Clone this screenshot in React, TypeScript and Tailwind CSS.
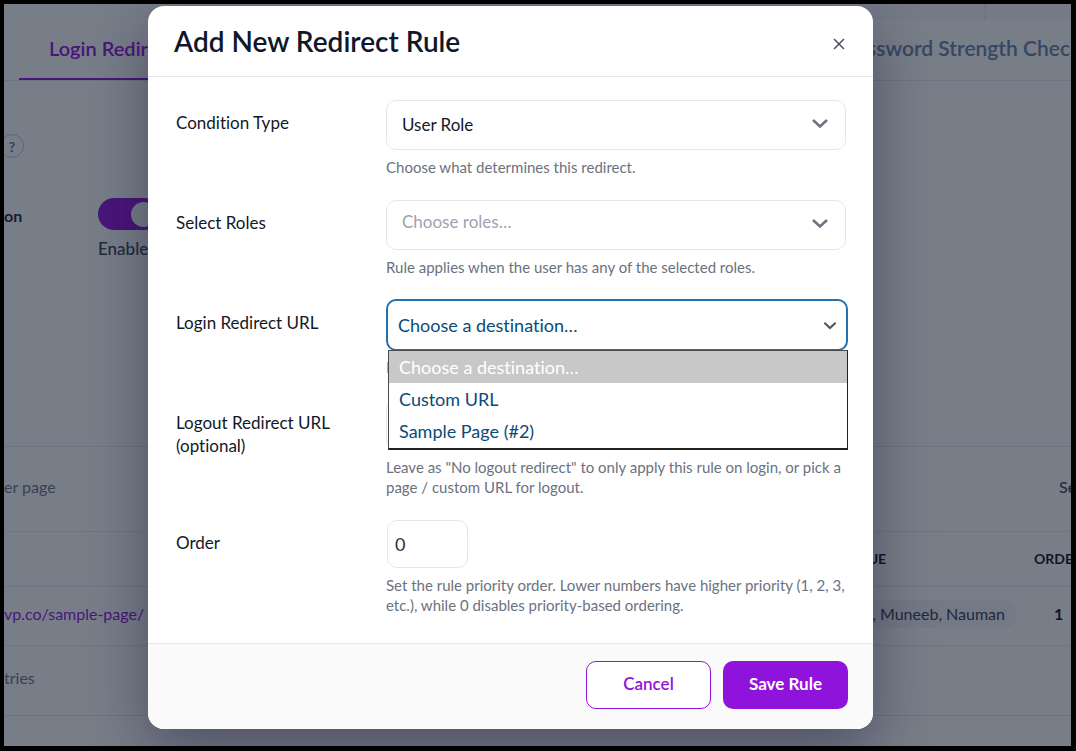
import React from 'react';

type FieldProps = {
  id: string;
  label: React.ReactNode;
  help?: React.ReactNode;
  children: React.ReactNode;
};

const Chevron = ({ className }: { className: string }) => (
  <svg viewBox="0 0 20 20" fill="none" stroke="currentColor" strokeWidth="2.6" className={className}>
    <path d="M3 6l7 6.5 7-6.5" />
  </svg>
);

const Field = ({ id, label, help, children }: FieldProps) => (
  <div className="grid grid-cols-[210px_minmax(0,1fr)]">
    <label htmlFor={id} className="pt-[11px] pr-8 text-[17px] leading-[23px] text-[#111827]">
      {label}
    </label>
    <div>
      {children}
      {help && <p className="mt-[7px] text-[15px] leading-[20px] text-[#6b7280]">{help}</p>}
    </div>
  </div>
);

const Background = () => (
  <div className="flex min-h-[742px] flex-col bg-[#f9fafb] text-[16px] whitespace-nowrap text-[#334155]">
    <nav className="flex h-[77px] justify-between border-b border-[#dfe2e8] pl-[15px] text-[21px] font-semibold">
      <a href="#login" className="flex w-[200px] items-center border-b-2 border-[#9013db] pt-3.5 pl-[30px] text-[20px] text-[#9013db]">
        Login Redirects
      </a>
      <div className="flex w-[227px] flex-col">
        <div className="flex h-4 shrink-0 justify-end bg-[#f1f2f5]">
          <div className="mr-[85px] w-0.5 bg-[#e6e8ec]" />
        </div>
        <a href="#password" className="flex flex-1 items-center pb-[5px] text-[#6482a8]">
          Password Strength Checker
        </a>
      </div>
    </nav>

    <section className="h-[366px] border-b border-[#dfe2e8] pt-[53px]">
      <button className="-ml-1 flex size-6 items-center justify-center rounded-full border border-[#b6c0dc] text-[14px] font-bold text-[#4f76ac]">
        ?
      </button>
      <div className="mt-10 flex">
        <span className="w-[94px] pt-1.5 font-bold text-[#1e293b]">on</span>
        <label className="flex flex-col gap-1.5">
          <input type="checkbox" role="switch" defaultChecked className="peer sr-only" />
          <span className="flex h-8 w-[62px] items-center justify-end rounded-full bg-[#9013db] pr-1">
            <span className="size-[25px] rounded-full bg-[#f9fafb]" />
          </span>
          <span className="text-[17px] font-medium">Enabled</span>
        </label>
      </div>
    </section>

    <div className="flex h-[85px] items-center justify-between border-b border-[#e5e7eb] pb-1 text-[#64748b]">
      <span>er page</span>
      <span className="w-[12px] font-medium text-[#334155]">Search</span>
    </div>

    <table className="w-full border-collapse text-left">
      <thead>
        <tr className="h-[54px] border-b border-[#dfe2e8] text-[14px] text-[#0f172a]">
          <th />
          <th className="w-[200px] pl-2 font-bold">VALUE</th>
          <th className="w-[37px] max-w-[37px] font-bold">ORDER</th>
        </tr>
      </thead>
      <tbody>
        <tr className="h-[59px] border-b border-[#e5e7eb]">
          <td className="pb-1">
            <a href="#sample" className="text-[#9013db]">
              vp.co/sample-page/
            </a>
          </td>
          <td className="pr-[17px] pb-1 text-right">
            <span className="inline-block rounded-full bg-[#eef0f4] px-3 leading-7">B, Muneeb, Nauman</span>
          </td>
          <td className="pb-1 pl-5 font-bold text-[#0f172a]">1</td>
        </tr>
      </tbody>
    </table>

    <div className="flex h-[70px] items-center border-b border-[#dfe2e8] pb-1 text-[#64748b]">tries</div>
  </div>
);

const selectBox =
  'block h-[50px] w-full appearance-none rounded-[10px] border border-[#e5e7eb] bg-white px-[15px] text-[17px] outline-none';

const options = ['Choose a destination…', 'Custom URL', 'Sample Page (#2)'];

const RuleDialog = () => (
  <form
    role="dialog"
    aria-labelledby="dialog-title"
    className="w-full max-w-[725px] overflow-hidden rounded-2xl bg-white shadow-[0_20px_60px_rgba(15,10,40,0.4)]"
  >
    <header className="flex h-[71px] items-center justify-between border-b border-[#e5e7eb] pr-6 pl-[26px]">
      <h2 id="dialog-title" className="text-[28px] font-semibold text-[#0f172a]">
        Add New Redirect Rule
      </h2>
      <button type="button" aria-label="Close" className="mt-1.5 p-1 text-[#4b5563]">
        <svg viewBox="0 0 12 12" className="size-3" fill="none" stroke="currentColor" strokeWidth="1.6">
          <path d="M1 1l10 10M11 1L1 11" />
        </svg>
      </button>
    </header>

    <div className="flex flex-col gap-[23px] pt-[23px] pr-[27px] pb-7 pl-7">
      <Field id="condition" label="Condition Type" help="Choose what determines this redirect.">
        <div className="relative">
          <select id="condition" className={`${selectBox} text-[#111827]`}>
            <option>User Role</option>
          </select>
          <Chevron className="pointer-events-none absolute top-[14px] right-4 size-5 text-[#6b7280]" />
        </div>
      </Field>

      <Field id="roles" label="Select Roles" help="Rule applies when the user has any of the selected roles.">
        <div className="relative">
          <select id="roles" className={`${selectBox} pb-[7px] text-[#9ca3af]`}>
            <option>Choose roles…</option>
          </select>
          <Chevron className="pointer-events-none absolute top-[14px] right-4 size-5 text-[#6b7280]" />
        </div>
      </Field>

      <Field id="login-url" label="Login Redirect URL" help="Pick the page users reach after login.">
        <div className="relative -my-px -mr-0.5">
          <select
            id="login-url"
            className="block h-[52px] w-full appearance-none rounded-[10px] border-2 border-[#2271b1] bg-white px-[10px] text-[18px] text-[#0a4b78] outline-none"
          >
            <option>Choose a destination…</option>
          </select>
          <Chevron className="pointer-events-none absolute top-[19px] right-[10px] size-4 text-[#50575e]" />
          <ul
            role="listbox"
            className="absolute inset-x-0 top-[51px] z-10 ml-0.5 border border-b-2 border-[#4a4a4a] border-r-[#222] border-b-[#222] bg-white pb-[1px] text-[18px] leading-8 text-[#0a4b78]"
          >
            {options.map((option, i) => (
              <li
                key={option}
                role="option"
                aria-selected={i === 0}
                className={i === 0 ? 'bg-[#c8c8c8] px-[10px] text-white' : 'px-[10px]'}
              >
                {option}
              </li>
            ))}
          </ul>
        </div>
      </Field>

      <Field
        id="logout-url"
        label={
          <>
            Logout Redirect URL
            <br />
            (optional)
          </>
        }
        help={`Leave as "No logout redirect" to only apply this rule on login, or pick a page / custom URL for logout.`}
      >
        <select id="logout-url" className={selectBox}>
          <option>No logout redirect</option>
        </select>
      </Field>

      <Field
        id="order"
        label="Order"
        help="Set the rule priority order. Lower numbers have higher priority (1, 2, 3, etc.), while 0 disables priority-based ordering."
      >
        <input
          id="order"
          type="text"
          inputMode="numeric"
          defaultValue="0"
          className="ml-px block h-12 w-[81px] rounded-[10px] border border-[#e5e7eb] px-[7px] text-[18px] text-[#2c3338] outline-none"
        />
      </Field>
    </div>

    <footer className="flex justify-end gap-3 border-t border-[#e5e7eb] bg-[#fafafa] pt-[17px] pr-[25px] pb-5 text-[17px]">
      <button type="button" className="h-12 w-[125px] rounded-[10px] border border-[#9013db] bg-white pb-0.5 font-semibold text-[#9013db]">
        Cancel
      </button>
      <button type="submit" className="h-12 w-[125px] rounded-[10px] bg-[#9013db] pb-0.5 font-bold text-white">
        Save Rule
      </button>
    </footer>
  </form>
);

const App = () => {
  return (
    <div className="relative min-h-screen overflow-hidden border-4 border-r-[5px] border-b-[5px] border-black font-[Lato,'Open_Sans',sans-serif] [font-variant-ligatures:none]">
      <Background />
      <div className="absolute inset-0 flex items-start justify-center bg-[#0f172a]/55 pt-0.5 pr-[54px]">
        <RuleDialog />
      </div>
    </div>
  );
};

export default App;
